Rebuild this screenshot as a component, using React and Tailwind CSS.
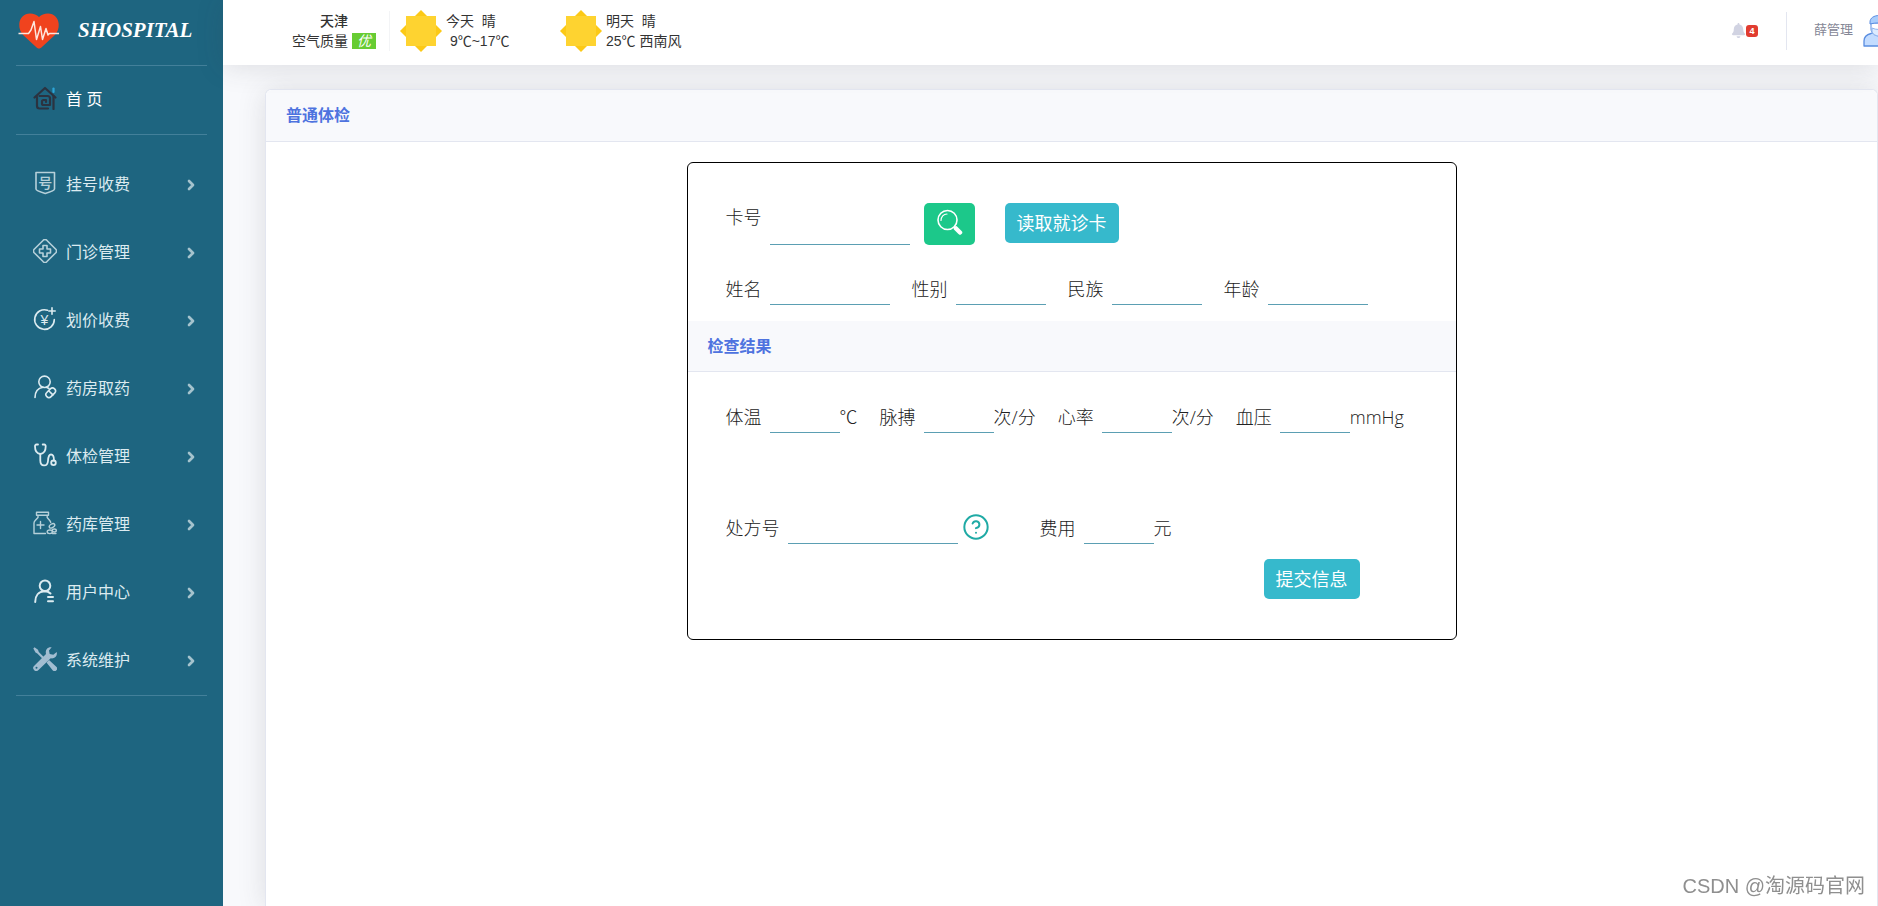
import { ChevronRight, CircleQuestionMark } from "lucide-react";
import { FaBell } from "react-icons/fa";

const iconProps = {
    viewBox: "0 0 24 24",
    fill: "none",
    stroke: "currentColor",
    strokeWidth: 1.6,
    strokeLinecap: "round",
    strokeLinejoin: "round",
    className: "size-6 shrink-0",
    "aria-hidden": true,
};

function LogoIcon() {
    return (
        <svg viewBox="0 0 42 36" className="w-[42px] h-9 shrink-0" aria-hidden="true">
            <path
                d="M21 35.500c-1.200 0-2.200-.8-3.200-1.800L5.600 22.500C2.500 19.500 1 15.500 1.300 11 1.700 5 6 .5 12 .5c3.700 0 6.800 1.200 9 3.600C23.200 1.700 26.300.5 30 .5c6 0 10.300 4.500 10.700 10.500.3 4.500-1.200 8.500-4.300 11.500L24.200 33.700c-1 1-2 1.800-3.200 1.800z"
                fill="#f0431e"
            />
            <path
                d="M.5 20.500h10l2.500-3.500 3-8.500 2.500 18 4-13 2 13 3.500-11 2 6.500 1.500-1.500h9.500"
                fill="none"
                stroke="#fde6dd"
                strokeWidth="1.5"
                strokeLinejoin="round"
            />
        </svg>
    );
}

function HomeIcon() {
    return (
        <svg {...iconProps} strokeWidth={2.2} stroke="#2b3340">
            <path d="M1.500 11.500 12 2l10.500 9.500" />
            <path d="M20.500 10v13M15 22.500H6.500a2.500 2.500 0 0 1-2.500-2.500v-9" />
            <path d="M6.500 10h8a2.500 2.500 0 0 1 2.500 2.500v6.500h-6.500a1.500 1.500 0 0 1-1.500-1.500v-2a1.500 1.500 0 0 1 1.500-1.500h2.500v2" />
            <path d="M20.500 2.500v3.500" stroke="#2ca5d8" />
        </svg>
    );
}

function RegisterIcon() {
    return (
        <svg {...iconProps} className="size-6 shrink-0 opacity-80">
            <path d="M3 1.500h18.500v16.500c0 1.500-6 3.500-9.250 4.500C9 21.500 3 19.500 3 18z" />
            <text
                x="12.250"
                y="16.500"
                textAnchor="middle"
                fontSize="14"
                fill="currentColor"
                stroke="none"
                fontWeight="500"
            >
                号
            </text>
        </svg>
    );
}

function ClinicIcon() {
    return (
        <svg {...iconProps} className="size-6 shrink-0 opacity-80">
            <path d="M10.300 1.200a2.500 2.500 0 0 1 3.400 0l9.100 9.100a2.500 2.500 0 0 1 0 3.400l-9.100 9.100a2.500 2.500 0 0 1-3.400 0l-9.100-9.100a2.500 2.500 0 0 1 0-3.400z" />
            <path d="M10 6.500h4V10h3.500v4H14v3.500h-4V14H6.500v-4H10z" />
        </svg>
    );
}

function PricingIcon() {
    return (
        <svg {...iconProps}>
            <path d="M14.500 3.200A9.800 9.800 0 1 0 21.300 12.500" />
            <path d="M19 .8v6.400M15.800 4h6.400" />
            <text
                x="11.500"
                y="17.500"
                textAnchor="middle"
                fontSize="14"
                fill="currentColor"
                stroke="none"
            >
                ¥
            </text>
        </svg>
    );
}

function PharmacyIcon() {
    return (
        <svg {...iconProps}>
            <circle cx="11.500" cy="6.800" r="5.700" />
            <path d="M2 22.500c0-5.500 3.200-9.300 8-10.200M13.500 12.300l2.500 1.200" />
            <rect x="12.200" y="14.800" width="11" height="6" rx="3" transform="rotate(-45 17.700 17.800)" />
            <path d="m15.700 15.700 4.200 4.200" />
        </svg>
    );
}

function CheckupIcon() {
    return (
        <svg {...iconProps} strokeWidth={1.8}>
            <path d="M5 1.500H3.500C2.500 1.500 2 2.200 2 3.200c0 4 1.200 7.300 5.300 7.800 4.200-.5 5.400-3.800 5.400-7.800 0-1-.5-1.700-1.500-1.700H9.700" />
            <path d="M7.300 11v6.500c0 6.500 7.200 6.500 7.700.5.200-4 .5-6.500 3-6.500s3 3 3 6" />
            <circle cx="20.500" cy="19.800" r="2.300" />
        </svg>
    );
}

function StockIcon() {
    return (
        <svg {...iconProps} strokeWidth={1.4} className="size-6 shrink-0 opacity-80">
            <path d="M3.500 1.200h12v3h-12zM5 4.200v2.300L2.200 9.500C1.500 10.300 1 11 1 12v10.500h11.500M14.200 4.200v2.300l2.500 3c.6.700 1 1.300 1 2" />
            <path d="M7.500 10.500v7M4 14h7" />
            <ellipse cx="19" cy="14.800" rx="3" ry="1.800" transform="rotate(-30 19 14.800)" />
            <ellipse cx="16.800" cy="20.800" rx="2.600" ry="1.800" />
            <ellipse cx="21.300" cy="19.500" rx="2" ry="1.500" />
            <path d="M19.400 22.500h3.500" />
        </svg>
    );
}

function UserIcon() {
    return (
        <svg {...iconProps} strokeWidth={2}>
            <circle cx="12" cy="6.800" r="5.300" />
            <path d="M2.200 23c0-6 3.300-10.500 9.300-10.700 2.500 0 4.500.7 6 2.200M15 18h5M15 22.200h5" />
        </svg>
    );
}

function ToolsIcon() {
    return (
        <svg {...iconProps} className="size-6 shrink-0 opacity-80" stroke="none" fill="#c3d3e6">
            <path d="M.3 1.500 1.500.3 5 2.800l.8 2.300 5 5-1.500 1.500-5-5L2.500 5.500zM13.500 15.500l2.500-2.500 7.300 6.700a2.500 2.500 0 0 1-3.500 3.700z" />
            <path d="M18.700.3 16 3.500l.7 3.500 3.600.8L23.700 5c1 4-2 7-6 6.300L5.500 23A2.800 2.800 0 0 1 1 19L13 7c-1-4 1.500-7.500 5.700-6.700zM3.500 19.800a1 1 0 1 0 0 2 1 1 0 0 0 0-2z" fillRule="evenodd" />
        </svg>
    );
}

function SunIcon() {
    return (
        <svg viewBox="0 0 42 42" className="size-[42px] shrink-0" aria-hidden="true">
            <path d="M21 0 42 21 21 42 0 21z" fill="#fcc916" />
            <path d="M6 6h30v30H6z" fill="#fed330" />
        </svg>
    );
}

function SearchIcon() {
    return (
        <svg viewBox="0 0 27 27" className="size-[27px]" fill="none" stroke="#fff" aria-hidden="true">
            <circle cx="11.500" cy="11" r="9.500" strokeWidth="1.600" />
            <path d="M5 11.500c0-3.500 2.500-6.500 6-6.500" strokeWidth="1.200" strokeLinecap="round" />
            <path d="m18 18 1.500 1.500" strokeWidth="2" />
            <path d="m20 19.500 4 4" strokeWidth="4.500" strokeLinecap="round" />
        </svg>
    );
}

function AvatarIcon() {
    return (
        <svg viewBox="0 0 32 32" className="size-8 shrink-0" strokeLinejoin="round" aria-hidden="true">
            <path
                d="M1 31v-5c0-4 3-6.500 7-7.500l4-1.500h8l4 1.500c4 1 7 3.500 7 7.500v5z"
                fill="#c3dcff"
                stroke="#5a8de0"
                strokeWidth="1.300"
            />
            <path d="M8 8h16v6c0 4-4 7-8 7s-8-3-8-7z" fill="#fff" stroke="#5a8de0" />
            <path d="M7 9V7c0-4 4-6.500 9-6.500S25 3 25 7v2c-6-1.500-12-1.500-18 0z" fill="#a9cdfc" stroke="#5a8de0" />
            <path d="M9 13c4 2 10 2 14 0v3c0 3-4 5-7 5s-7-2-7-5z" fill="#dcebff" stroke="#8fb5ee" />
        </svg>
    );
}

const menuItems = [
    { name: "挂号收费", Icon: RegisterIcon },
    { name: "门诊管理", Icon: ClinicIcon },
    { name: "划价收费", Icon: PricingIcon },
    { name: "药房取药", Icon: PharmacyIcon },
    { name: "体检管理", Icon: CheckupIcon },
    { name: "药库管理", Icon: StockIcon },
    { name: "用户中心", Icon: UserIcon },
    { name: "系统维护", Icon: ToolsIcon },
];

function Sidebar() {
    return (
        <aside className="w-[223px] shrink-0 bg-[#1e6580] text-white">
            <a href="#" className="flex items-center h-[65px] pl-[18px] pb-1 gap-[18px]">
                <LogoIcon />
                <span className="font-['Liberation_Serif',serif] text-[21px] font-bold italic">SHOSPITAL</span>
            </a>
            <hr className="mx-4 border-[#43809a]" />
            <a href="#" className="flex items-center h-[68px] pl-[33px] gap-[9px]">
                <span className="pb-1">
                    <HomeIcon />
                </span>
                <span>首 页</span>
            </a>
            <hr className="mx-4 border-[#43809a]" />
            <nav className="pt-4">
                {menuItems.map(({ name, Icon }) => (
                    <a key={name} href="#" className="flex items-center h-[68px] pl-[33px] pr-6 gap-[9px] text-[#dcebf0]">
                        <span className="pb-1">
                            <Icon />
                        </span>
                        <span className="flex-1">{name}</span>
                        <ChevronRight className="size-4 text-[#a5c3cd]" strokeWidth={4} />
                    </a>
                ))}
            </nav>
            <hr className="mx-4 border-[#43809a]" />
        </aside>
    );
}

function Topbar() {
    return (
        <header className="relative z-10 flex items-center h-[65px] pl-[69px] pb-3 bg-white shadow-[0_2px_28px_0_rgba(58,59,69,0.15)] overflow-x-clip text-sm text-[#333]">
            {/* Weather */}
            <div className="flex items-center gap-[10px] pt-2">
                <div className="w-[98px] pr-[13px] text-center leading-5 border-r border-gray-100">
                    <p className="font-medium">天津</p>
                    <p className="flex items-center gap-1 whitespace-nowrap">
                        空气质量
                        <em className="w-6 h-4 leading-4 shrink-0 bg-[#67cc33] text-white">优</em>
                    </p>
                </div>
                <div className="flex items-center gap-1 w-[150px]">
                    <SunIcon />
                    <div className="leading-5 whitespace-pre">
                        <p>今天  晴</p>
                        <p> 9℃~17℃</p>
                    </div>
                </div>
                <div className="flex items-center gap-1">
                    <SunIcon />
                    <div className="leading-5 whitespace-pre">
                        <p>明天  晴</p>
                        <p>25℃ 西南风</p>
                    </div>
                </div>
            </div>

            {/* Alerts and user */}
            <div className="flex items-center ml-auto pt-2 -mr-[17px]">
                <button type="button" aria-label="消息" className="flex items-center mr-7 text-[#d1d3e2]">
                    <FaBell className="size-[15px]" />
                    <span className="w-3 h-3 rounded-[3px] bg-[#e13c30] text-white text-[9px] leading-3 font-bold text-center">
                        4
                    </span>
                </button>
                <a href="#" className="flex items-center h-[38px] pl-[27px] gap-[10px] border-l border-[#e3e6f0] text-[13px] text-[#858796] whitespace-nowrap">
                    薛管理
                    <AvatarIcon />
                </a>
            </div>
        </header>
    );
}

function Field({ id, label, unit, width }) {
    return (
        <div className="flex items-end">
            <label htmlFor={id} className="leading-8 mr-2">
                {label}
            </label>
            <input
                id={id}
                type="text"
                className={`${width} h-[34px] bg-transparent border-b border-[#5b9fb3] focus:outline-none`}
            />
            {unit && <span className="leading-8">{unit}</span>}
        </div>
    );
}

function CheckupForm() {
    return (
        <form
            onSubmit={(e) => e.preventDefault()}
            className="w-[770px] max-w-full mx-auto pt-10 pb-10 border border-black rounded-md font-['Open_Sans','Noto_Sans_CJK_SC',sans-serif] text-lg font-light text-[#222]"
        >
            <div className="flex items-start px-[38px]">
                <label htmlFor="card" className="leading-7 mr-2">
                    卡号
                </label>
                <input
                    id="card"
                    type="text"
                    className="w-[140px] h-[42px] bg-transparent border-b border-[#5b9fb3] focus:outline-none"
                />
                <button type="submit" aria-label="查询" className="flex justify-center items-center w-[51px] h-[42px] ml-[14px] pb-1 rounded-[5px] bg-[#1cc88a]">
                    <SearchIcon />
                </button>
                <button type="button" className="h-10 px-3 ml-[30px] rounded-[5px] bg-[#36b9cc] font-normal text-white">
                    读取就诊卡
                </button>
            </div>

            <div className="flex px-[38px] mt-[26px] gap-[22px]">
                <Field id="name" label="姓名" width="w-[120px]" />
                <Field id="sex" label="性别" width="w-[90px]" />
                <Field id="nation" label="民族" width="w-[90px]" />
                <Field id="age" label="年龄" width="w-[100px]" />
            </div>

            <h2 className="mt-4 px-5 h-[51px] leading-[51px] bg-[#f8f9fc] border-b border-[#e3e6f0] text-base font-bold text-[#4e73df]">
                检查结果
            </h2>

            <div className="flex px-[38px] mt-[27px] gap-[22px]">
                <Field id="temperature" label="体温" unit="℃" width="w-[70px]" />
                <Field id="pulse" label="脉搏" unit="次/分" width="w-[70px]" />
                <Field id="heart" label="心率" unit="次/分" width="w-[70px]" />
                <Field id="pressure" label="血压" unit="mmHg" width="w-[70px]" />
            </div>

            <div className="flex items-center px-[38px] mt-[77px]">
                <Field id="prescription" label="处方号" width="w-[170px]" />
                <button type="button" aria-label="帮助" className="ml-1 mr-[50px] text-[#1faaa5]">
                    <CircleQuestionMark className="size-7" strokeWidth={1.7} />
                </button>
                <Field id="cost" label="费用" unit="元" width="w-[70px]" />
            </div>

            <div className="flex justify-end mt-[15px] pr-24">
                <button type="submit" className="h-10 px-3 rounded-[5px] bg-[#36b9cc] font-normal text-white">
                    提交信息
                </button>
            </div>
        </form>
    );
}

export default function App() {
    return (
        <div className="flex min-h-screen overflow-hidden bg-[#f8f9fc] font-['Liberation_Sans','Noto_Sans_CJK_SC',sans-serif]">
            <Sidebar />
            <div className="flex flex-col flex-1 min-w-0">
                <Topbar />
                <main className="flex flex-col flex-1 pt-6 pl-[42px]">
                    <section className="flex-1 bg-white border border-b-0 border-[#e3e6f0] rounded-t-md shadow-[0_2px_28px_0_rgba(58,59,69,0.15)]">
                        <h1 className="px-5 h-[52px] leading-[51px] rounded-t-md bg-[#f8f9fc] border-b border-[#e3e6f0] text-base font-bold text-[#4e73df]">
                            普通体检
                        </h1>
                        <div className="p-5">
                            <CheckupForm />
                        </div>
                    </section>
                </main>
            </div>
            <p className="fixed right-[13px] bottom-[6px] text-xl text-[#8f8f8f]">CSDN @淘源码官网</p>
        </div>
    );
}
